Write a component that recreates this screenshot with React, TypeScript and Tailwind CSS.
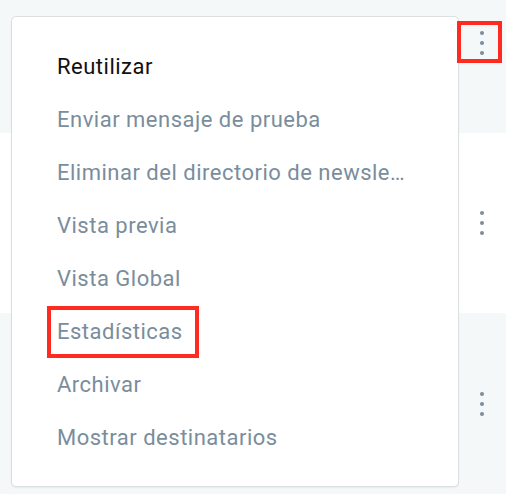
import React from "react";

function Kebab() {
  return (
    <div className="flex flex-col items-center gap-[6px]">
      <span className="block w-[4px] h-[4px] rounded-full bg-[#7b8d9c]" />
      <span className="block w-[4px] h-[4px] rounded-full bg-[#7b8d9c]" />
      <span className="block w-[4px] h-[4px] rounded-full bg-[#7b8d9c]" />
    </div>
  );
}

const items = [
  "Reutilizar",
  "Enviar mensaje de prueba",
  "Eliminar del directorio de newsletters",
  "Vista previa",
  "Vista Global",
  "Estadísticas",
  "Archivar",
  "Mostrar destinatarios",
];

export default function App() {
  return (
    <div
      className="relative w-[506px] h-[504px] overflow-hidden bg-white"
      style={{ fontFamily: "Roboto, 'Liberation Sans', sans-serif" }}
    >
      <div className="flex flex-col mt-[-47px]">
        <div className="h-[180px] bg-[#f5f8f9] flex items-center justify-end pr-[22px]">
          <Kebab />
        </div>
        <div className="h-[180px] bg-white flex items-center justify-end pr-[22px]">
          <Kebab />
        </div>
        <div className="h-[181px] bg-[#f5f8f9] flex items-center justify-end pr-[22px]">
          <Kebab />
        </div>
      </div>

      <div className="absolute left-[11px] top-[16px] w-[448px] h-[471px] bg-white border border-[#dcdfe1] rounded-[5px] shadow-[0_1px_2px_rgba(0,0,0,0.06)] py-[23px]">
        {items.map((t, i) => (
          <div
            key={t}
            className={
              "h-[53px] flex items-center pl-[45px] pr-[50px] text-[22px] tracking-[0.5px] " +
              (i === 0 ? "text-[#111111]" : "text-[#7a8d9c]")
            }
          >
            <span className="truncate">{t}</span>
          </div>
        ))}
      </div>

      <div className="absolute left-[457px] top-[21px] w-[45px] h-[42px] border-[4px] border-[#ff2a20]" />
      <div className="absolute left-[47px] top-[306px] w-[152px] h-[52px] border-[4px] border-[#ff2a20]" />
    </div>
  );
}
